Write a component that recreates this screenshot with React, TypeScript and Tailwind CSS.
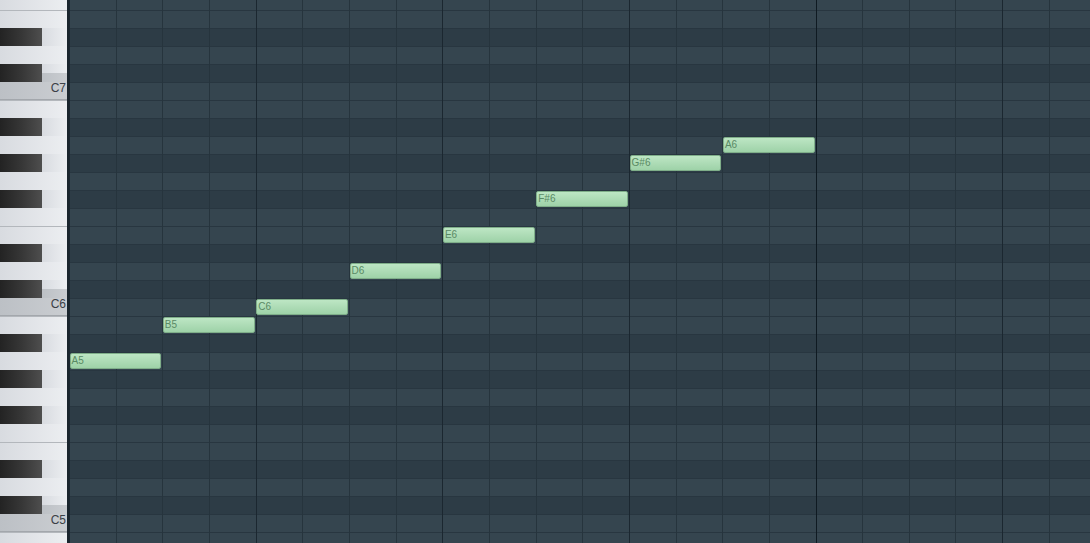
import React from 'react';

// rows from top (F7) to bottom (B4), 18px each
const ROWS = [
  'F7', 'E7', 'D#7', 'D7', 'C#7', 'C7',
  'B6', 'A#6', 'A6', 'G#6', 'G6', 'F#6', 'F6', 'E6', 'D#6', 'D6', 'C#6', 'C6',
  'B5', 'A#5', 'A5', 'G#5', 'G5', 'F#5', 'F5', 'E5', 'D#5', 'D5', 'C#5', 'C5',
  'B4',
];

const ROW_H = 18;
const COL_W = 1021 / 21.875;

interface Note {
  name: string;
  col: number;
  len: number;
}

const notes: Note[] = [
  { name: 'A5', col: 0, len: 2 },
  { name: 'B5', col: 2, len: 2 },
  { name: 'C6', col: 4, len: 2 },
  { name: 'D6', col: 6, len: 2 },
  { name: 'E6', col: 8, len: 2 },
  { name: 'F#6', col: 10, len: 2 },
  { name: 'G#6', col: 12, len: 2 },
  { name: 'A6', col: 14, len: 2 },
];

const isBlack = (n: string) => n.includes('#');

const whiteKey = 'bg-linear-to-r from-[#d8dbe0] to-[#eceef1]';
const greyKey = 'bg-linear-to-r from-[#bcc0c5] to-[#cacdd1]';

const KeyRow: React.FC<{ name: string }> = ({ name }) => {
  if (isBlack(name)) {
    const below = name.startsWith('C#') ? greyKey : whiteKey;
    return (
      <div className="flex h-[18px]">
        <div className="w-[42px] bg-linear-to-r from-[#232323] via-[#363636] to-[#4e4e4e]" />
        <div className="flex flex-1 flex-col">
          <div className={`flex-1 ${whiteKey}`} />
          <div className={`flex-1 ${below}`} />
        </div>
      </div>
    );
  }
  if (name.startsWith('C')) {
    return (
      <div className={`flex h-[18px] items-start justify-end border-b border-[#a3a7ac] pr-[1px] ${greyKey}`}>
        <span className="text-[12px] leading-none text-[#3b4046]">{name}</span>
      </div>
    );
  }
  const edge = name.startsWith('E') || name.startsWith('B');
  return <div className={`h-[18px] ${whiteKey} ${edge ? 'border-t border-[#b3b7bc]' : ''}`} />;
};

const App: React.FC = () => {
  return (
    <div className="h-[543px] w-[1090px] overflow-hidden bg-[#2e3d47] font-['Liberation_Sans',Arial,sans-serif]">
      <div className="-mt-[8px] flex">
        <div className="w-[69px] shrink-0 border-r-2 border-[#1a252d]">
          {ROWS.map((n) => (
            <KeyRow key={n} name={n} />
          ))}
        </div>

        <div className="relative flex-1 overflow-hidden">
          {ROWS.map((n) => (
            <div
              key={n}
              className={`h-[18px] border-t border-[#283640] ${isBlack(n) ? 'bg-[#2d3c46]' : 'bg-[#35454f]'}`}
            />
          ))}

          <div className="absolute inset-0 flex">
            {Array.from({ length: 23 }).map((_, i) => (
              <div
                key={i}
                className={`h-full w-[46.67px] shrink-0 border-l ${
                  i === 16
                    ? 'border-[#0f1a22]'
                    : i % 4 === 0
                    ? 'border-[#1b2730]'
                    : 'border-[#26343d]'
                }`}
              />
            ))}
          </div>

          {notes.map((note) => (
            <div
              key={note.name}
              className="absolute flex h-[16px] items-center rounded-[2px] border border-[#7fae89] bg-linear-to-b from-[#bde6c4] to-[#9ed2a8] pl-[1px] text-[10px] leading-none text-[#5a8a64]"
              style={{
                left: note.col * COL_W + 0.5,
                top: ROWS.indexOf(note.name) * ROW_H + 1,
                width: note.len * COL_W - 1.5,
              }}
            >
              {note.name}
            </div>
          ))}
        </div>
      </div>
    </div>
  );
};

export default App;
